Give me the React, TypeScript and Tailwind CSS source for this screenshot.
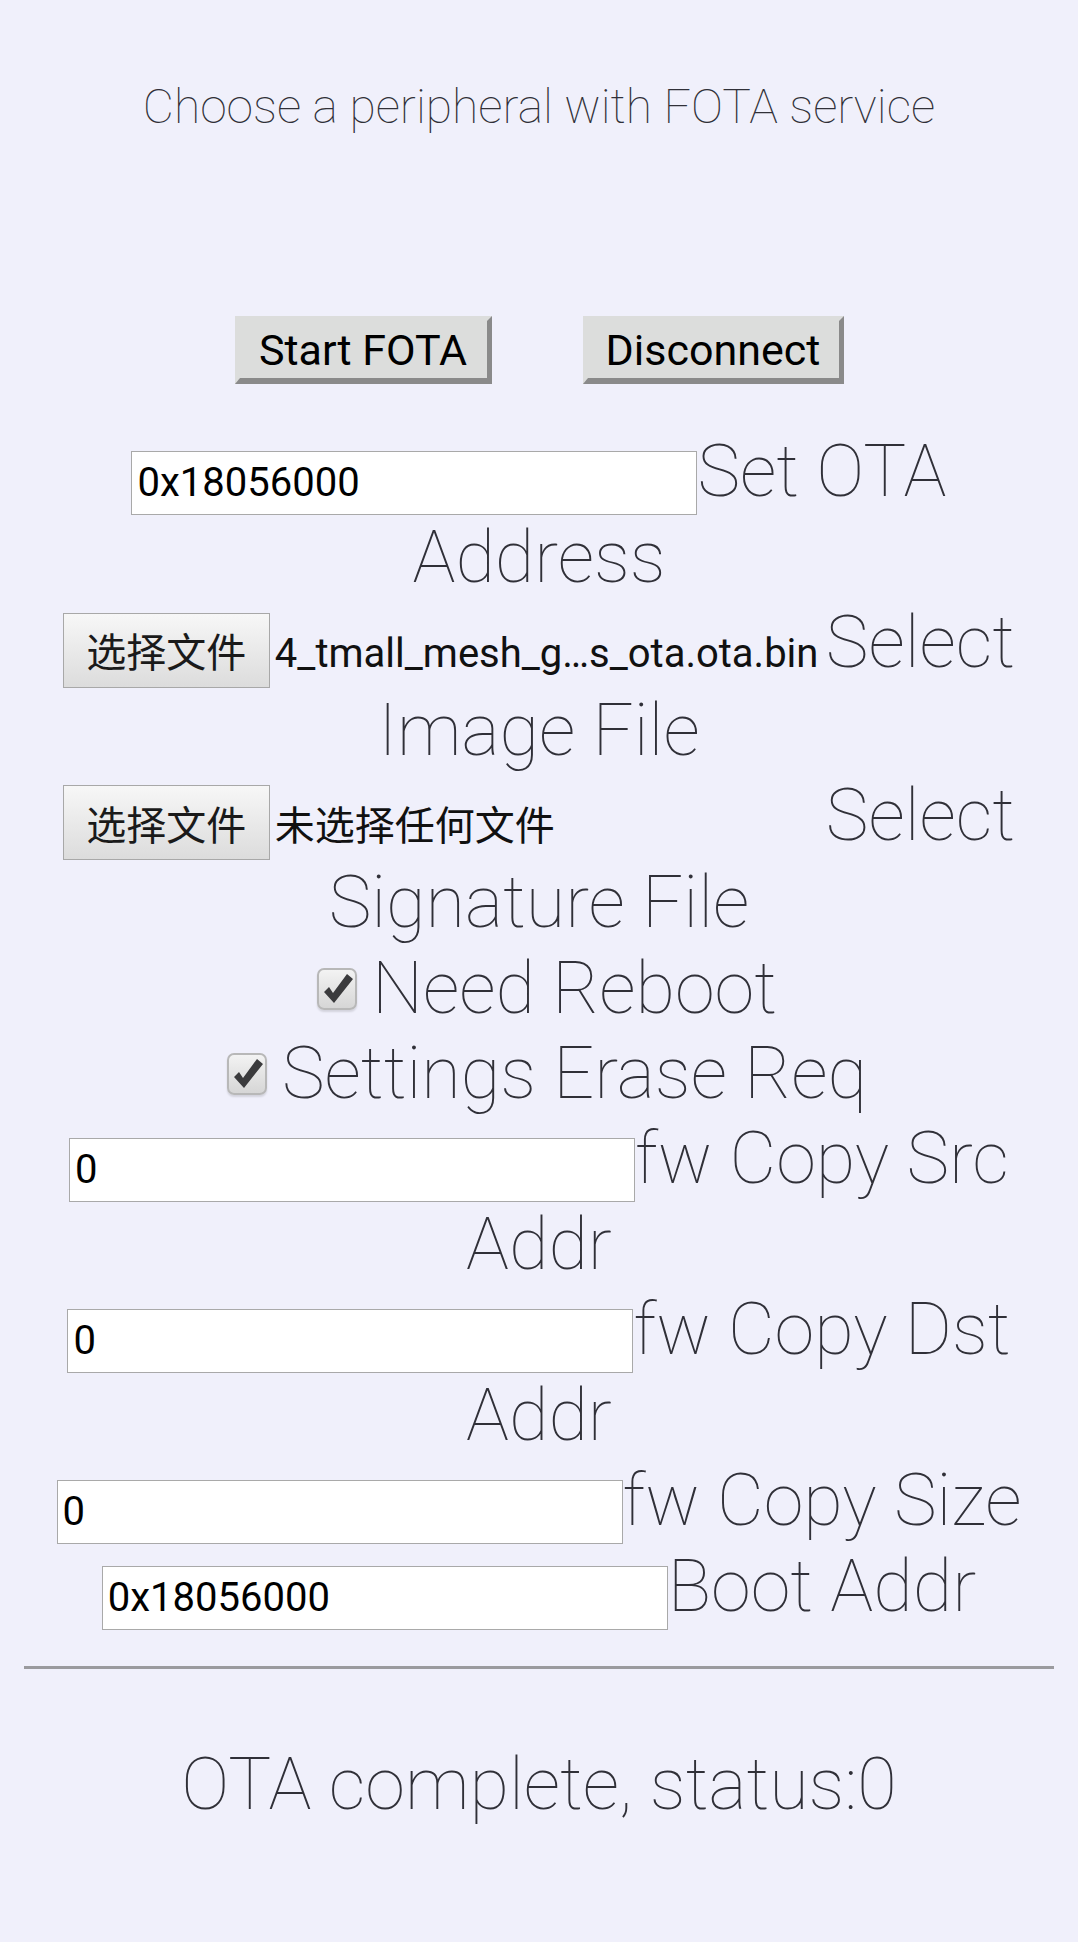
import React from 'react';

const rowText = "text-[72px] leading-[85.3px] font-thin";

function TextInput({ value }: { value: string }) {
  return (
    <input
      readOnly
      defaultValue={value}
      className="inline-block h-[64px] w-[566px] border border-[#a9a9a9] bg-white px-[5px] align-baseline font-['Roboto',sans-serif] text-[40px] font-normal text-black outline-none"
    />
  );
}

function FileInput({ name, cjk }: { name: string; cjk?: boolean }) {
  return (
    <span className="inline-flex w-[763px] items-baseline align-baseline">
      <span className="inline-flex h-[75px] w-[207px] shrink-0 items-center justify-center border border-[#a8a8a8] bg-linear-to-b from-[#f7f7f7] to-[#dcdcdc] font-['Noto_Sans_CJK_SC',sans-serif] text-[40px] leading-[58px] font-normal text-[#1a1a1a]">
        选择文件
      </span>
      <span
        className={
          cjk
            ? "ml-[5px] font-['Noto_Sans_CJK_SC',sans-serif] text-[40px] leading-[58px] font-normal text-[#111]"
            : "ml-[5px] font-['Roboto',sans-serif] text-[40px] leading-[47px] font-normal text-[#111]"
        }
      >
        {name}
      </span>
    </span>
  );
}

function Check() {
  return (
    <span className="mr-[15px] inline-block h-[42px] w-[40px] rounded-[7px] border-2 border-[#b8b8b8] bg-linear-to-b from-[#f3f3f3] to-[#d6d6d6] align-[3px] shadow-[0_2px_2px_rgba(0,0,0,0.12)]">
      <svg viewBox="0 0 36 38" className="block h-full w-full">
        <polygon points="5,22 10,17 14,23 28,4 34,9 15,33" fill="#3b3b3d" />
      </svg>
    </span>
  );
}

export default function App() {
  return (
    <div className="min-h-[1942px] bg-[#f0f0fb] px-[24px] text-center font-['Roboto',sans-serif] text-[#303038]">
      <p className="pt-[79px] text-[48px] leading-[56.25px] font-thin">
        Choose a peripheral with FOTA service
      </p>

      <div className="mt-[181px] flex justify-center gap-[91px]">
        <button className="h-[68px] w-[257px] border-[5px] border-b-[6px] border-t-[#dcdddc] border-l-[#dcdddc] border-r-[#8a8a8a] border-b-[#8a8a8a] bg-[#dcdddc] font-['Roboto',sans-serif] text-[43px] leading-[50px] font-normal text-black">
          Start FOTA
        </button>
        <button className="h-[68px] w-[261px] border-[5px] border-b-[6px] border-t-[#dcdddc] border-l-[#dcdddc] border-r-[#8a8a8a] border-b-[#8a8a8a] bg-[#dcdddc] font-['Roboto',sans-serif] text-[43px] leading-[50px] font-normal text-black">
          Disconnect
        </button>
      </div>

      <div className={`mt-[45px] ${rowText}`}>
        <div>
          <TextInput value="0x18056000" />Set OTA Address
        </div>
        <div>
          <FileInput name="4_tmall_mesh_g…s_ota.ota.bin" />Select Image File
        </div>
        <div>
          <FileInput name="未选择任何文件" cjk />Select Signature File
        </div>
        <div className="pl-[16px]">
          <Check />Need Reboot
        </div>
        <div className="pl-[16px]">
          <Check />Settings Erase Req
        </div>
        <div>
          <TextInput value="0" />fw Copy Src Addr
        </div>
        <div>
          <TextInput value="0" />fw Copy Dst Addr
        </div>
        <div>
          <TextInput value="0" />fw Copy Size
        </div>
        <div>
          <TextInput value="0x18056000" />Boot Addr
        </div>
      </div>

      <hr className="mt-[36px] h-[3px] border-0 bg-[#9a9a9e]" />

      <p className={`mt-[73px] ${rowText}`}>OTA complete, status:0</p>
    </div>
  );
}
